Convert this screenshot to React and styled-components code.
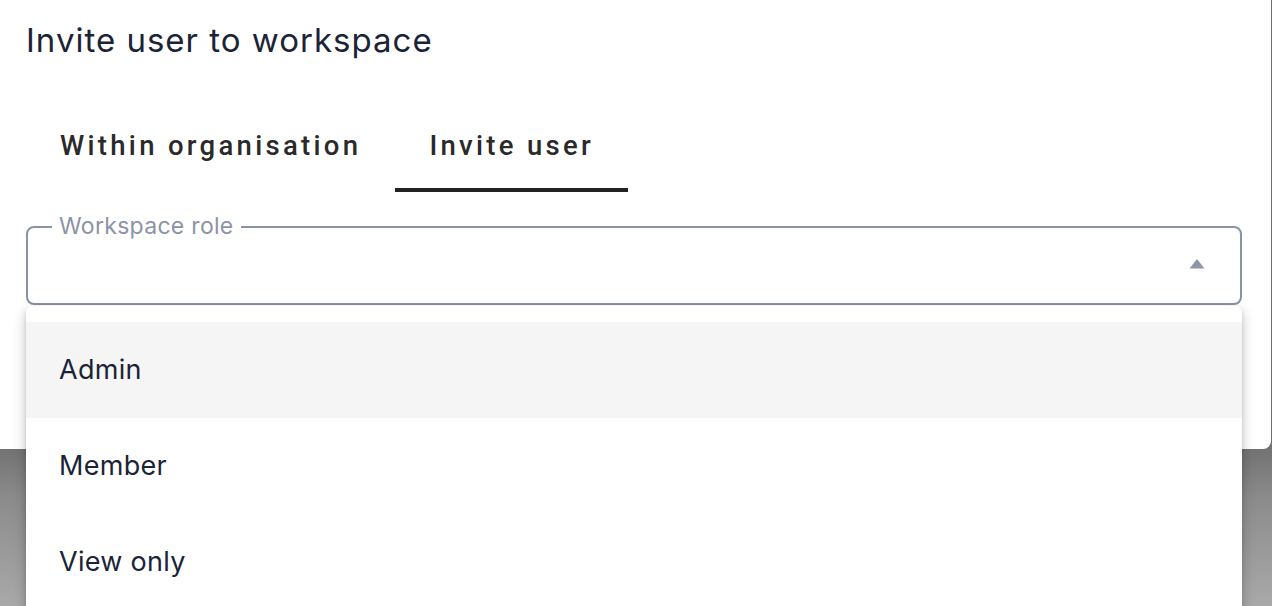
import React from 'react';
import styled, { createGlobalStyle } from 'styled-components';

const GlobalStyle = createGlobalStyle`
    html, body {
        margin: 0;
        padding: 0;
        width: 1272px;
        height: 606px;
        overflow: hidden;
        background: linear-gradient(180deg, #6e6e6e 0px, #6e6e6e 440px, #8c8c8c 500px, #a9a9a9 606px);
        font-family: Inter, "Noto Sans", sans-serif;
    }
`;

const Page = styled.div`
    position: relative;
    width: 1272px;
    height: 606px;
`;

const Dialog = styled.div`
    width: 1271px;
    height: 449px;
    background: #ffffff;
    border-bottom-right-radius: 8px;
    box-sizing: border-box;
    padding: 0 30px 0 26px;
    display: flex;
    flex-direction: column;
`;

const Title = styled.h2`
    margin: 0;
    padding-top: 19px;
    height: 42px;
    font-family: Inter, "Noto Sans", sans-serif;
    font-weight: 400;
    font-size: 33px;
    line-height: 42px;
    letter-spacing: 1px;
    color: #1b2437;
`;

const Tabs = styled.div`
    display: flex;
    margin-top: 39px;
`;

const Tab = styled.div`
    padding: 2px 34px 0;
    height: 92px;
    display: flex;
    align-items: center;
    box-sizing: border-box;
    font-family: Roboto, "Liberation Sans", sans-serif;
    font-weight: 500;
    font-size: 27.5px;
    letter-spacing: 3.3px;
    color: #2a2a2a;
    -webkit-font-smoothing: antialiased;
    border-bottom: 4px solid ${p => (p.$active ? '#222222' : 'transparent')};
`;

const Field = styled.div`
    margin-top: 34px;
    width: 1216px;
    height: 79px;
    box-sizing: border-box;
    border: 2px solid #8a92a6;
    border-radius: 8px;
    padding: 0 35px 0 24px;
    position: relative;
    display: flex;
    align-items: center;
    justify-content: flex-end;
`;

const Label = styled.span`
    position: absolute;
    left: 24px;
    top: -14px;
    padding: 0 7px;
    background: #ffffff;
    font-family: Inter, "Noto Sans", sans-serif;
    font-size: 23px;
    line-height: 24px;
    letter-spacing: 0.3px;
    color: #8c93a8;
`;

const Arrow = styled.svg`
    width: 16px;
    height: 11px;
    margin-top: -4px;
`;

const Menu = styled.ul`
    position: absolute;
    left: 26px;
    top: 306px;
    width: 1216px;
    margin: 0;
    padding: 16px 0 0;
    list-style: none;
    background: #ffffff;
    border-radius: 6px 6px 0 0;
    box-shadow: 0 5px 14px rgba(0, 0, 0, 0.22), 0 2px 4px rgba(0, 0, 0, 0.12);
`;

const Item = styled.li`
    height: 96px;
    display: flex;
    align-items: center;
    padding-left: 33px;
    padding-bottom: 2px;
    box-sizing: border-box;
    font-family: Inter, "Noto Sans", sans-serif;
    font-size: 27px;
    letter-spacing: 0.3px;
    color: #1b2437;
    background: ${p => (p.$selected ? '#f5f5f5' : '#ffffff')};
`;

const roles = ['Admin', 'Member', 'View only'];

export default function App() {
    return (
        <Page>
            <GlobalStyle />
            <Dialog>
                <Title>Invite user to workspace</Title>
                <Tabs>
                    <Tab>Within organisation</Tab>
                    <Tab $active>Invite user</Tab>
                </Tabs>
                <Field>
                    <Label>Workspace role</Label>
                    <Arrow viewBox="0 0 16 11">
                        <path d="M0.5 10.5 L8 1 L15.5 10.5 Z" fill="#8f96aa" />
                    </Arrow>
                </Field>
            </Dialog>
            <Menu>
                {roles.map((r, i) => (
                    <Item key={r} $selected={i === 0}>{r}</Item>
                ))}
            </Menu>
        </Page>
    );
}
